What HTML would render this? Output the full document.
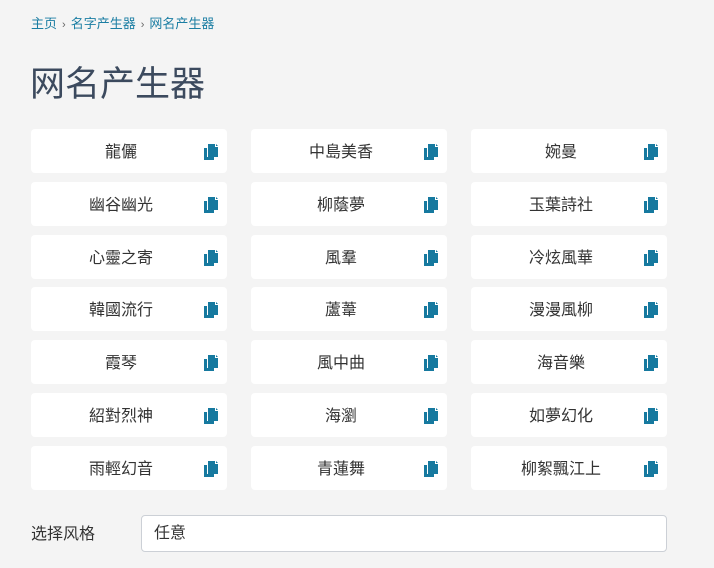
<!DOCTYPE html>
<html><head><meta charset="utf-8"><style>
body{margin:0;background:#f4f4f4;font-family:"Liberation Sans","Noto Sans CJK SC",sans-serif;width:714px;height:568px;overflow:hidden;position:relative}
.bc{position:absolute;left:31px;top:15px;font-size:13px;color:#1b7ea3;line-height:18px}
.bc span{color:#666;font-size:11px;margin:0 5px}
h1{position:absolute;left:30px;top:62px;margin:0;font-size:35px;font-weight:normal;color:#3c4a5e;line-height:46px}
.c{position:absolute;width:196px;height:44px;background:#fff;border-radius:4px;font-size:16px;color:#333;line-height:44px}
.c .t{position:absolute;left:0;top:2px;width:180px;text-align:center}
.c svg{position:absolute;left:173px;top:15px}
.lab{position:absolute;left:31px;top:524px;font-size:16px;color:#333;line-height:22px}
.inp{position:absolute;left:141px;top:515px;width:524px;height:35px;background:#fff;border:1px solid #ccd0d6;border-radius:4px;font-size:16px;color:#333;line-height:35px;text-indent:12px}
</style></head><body>
<div class="bc">主页<span>›</span>名字产生器<span>›</span>网名产生器</div>
<h1>网名产生器</h1>
<div id="g"></div>
<div class="lab">选择风格</div>
<div class="inp">任意</div>
<script>
var n=["龍儷","中島美香","婉曼","幽谷幽光","柳蔭夢","玉葉詩社","心靈之寄","風羣","冷炫風華","韓國流行","蘆葦","漫漫風柳","霞琴","風中曲","海音樂","紹對烈神","海瀏","如夢幻化","雨輕幻音","青蓮舞","柳絮飄江上"];
var ys=[129,182,235,287,340,393,446],xs=[31,251,471],h="";
var ic='<svg width="14" height="16" viewBox="0 0 14 16"><path d="M0 4h3v9h7v3H0z" fill="#16799f"/><path d="M4 0h7v3h3v10H4z" fill="#16799f"/><path d="M12 0l2 2h-2z" fill="#16799f"/></svg>';
n.forEach(function(t,i){h+='<div class="c" style="left:'+xs[i%3]+'px;top:'+ys[Math.floor(i/3)]+'px"><div class="t">'+t+'</div>'+ic+'</div>';});
document.getElementById("g").innerHTML=h;
</script>
</body></html>
